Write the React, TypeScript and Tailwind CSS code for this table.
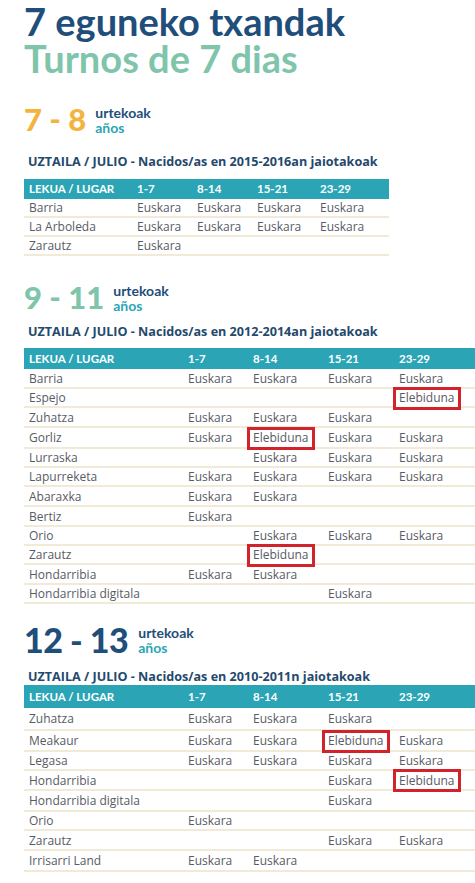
import React from "react";

type Cell = "" | "E" | "B";
type Row = { name: string; h: number; cells: Cell[] };

const BLUE = "text-[#1f4e7a]";

function Box() {
  return (
    <span className="inline-flex items-center h-[23px] -ml-[6px] px-[3px] border-[3px] border-[#d2232d] bg-white">
      Elebiduna
    </span>
  );
}

function Table({
  widths,
  rows,
  headerH,
  width,
}: {
  widths: number[];
  rows: Row[];
  headerH: number;
  width: number;
}) {
  const headers = ["LEKUA / LUGAR", "1-7", "8-14", "15-21", "23-29"];
  return (
    <div className="flex flex-col" style={{ width }}>
      <div
        className="flex items-center bg-[#2ba5b6] text-white font-bold text-[11.5px]"
        style={{ height: headerH }}
      >
        {headers.map((h, i) => (
          <div key={i} className="pl-[5px] shrink-0" style={{ width: widths[i] }}>
            {h}
          </div>
        ))}
      </div>
      {rows.map((r, ri) => (
        <div
          key={ri}
          className="flex items-center border-b-[2px] border-[#f1ead7] text-[12px] text-[#575b63] font-['Open_Sans',sans-serif]"
          style={{ height: r.h }}
        >
          <div className="pl-[5px] shrink-0 pt-[1px]" style={{ width: widths[0] }}>
            {r.name}
          </div>
          {r.cells.map((c, ci) => (
            <div
              key={ci}
              className="pl-[5px] shrink-0 flex items-center pt-[1px]"
              style={{ width: widths[ci + 1] }}
            >
              {c === "E" ? "Euskara" : c === "B" ? <Box /> : null}
            </div>
          ))}
        </div>
      ))}
    </div>
  );
}

function Age({
  num,
  color,
  size,
  gap,
}: {
  num: string;
  color: string;
  size: string;
  gap: string;
}) {
  return (
    <div className={`flex items-center ${gap}`}>
      <div className={`font-black ${color} ${size} leading-none`}>{num}</div>
      <div className="flex flex-col text-[14px] font-bold leading-[15px]">
        <span className={BLUE}>urtekoak</span>
        <span className="text-[#2ba5b6]">años</span>
      </div>
    </div>
  );
}

function Sub({ text }: { text: string }) {
  return (
    <div className="text-[12.6px] font-bold text-[#24496c] leading-[14px] pl-[4px] font-['Open_Sans',sans-serif]">
      {text}
    </div>
  );
}

const t1: Row[] = [
  { name: "Barria", h: 19, cells: ["E", "E", "E", "E"] },
  { name: "La Arboleda", h: 19, cells: ["E", "E", "E", "E"] },
  { name: "Zarautz", h: 19, cells: ["E", "", "", ""] },
];

const t2: Row[] = [
  { name: "Barria", h: 20, cells: ["E", "E", "E", "E"] },
  { name: "Espejo", h: 19, cells: ["", "", "", "B"] },
  { name: "Zuhatza", h: 20, cells: ["E", "E", "E", ""] },
  { name: "Gorliz", h: 21, cells: ["E", "B", "E", "E"] },
  { name: "Lurraska", h: 19, cells: ["", "E", "E", "E"] },
  { name: "Lapurreketa", h: 19, cells: ["E", "E", "E", "E"] },
  { name: "Abaraxka", h: 20, cells: ["E", "E", "", ""] },
  { name: "Bertiz", h: 20, cells: ["E", "", "", ""] },
  { name: "Orio", h: 19, cells: ["", "E", "E", "E"] },
  { name: "Zarautz", h: 19, cells: ["", "B", "", ""] },
  { name: "Hondarribia", h: 20, cells: ["E", "E", "", ""] },
  { name: "Hondarribia digitala", h: 19, cells: ["", "", "E", ""] },
];

const t3: Row[] = [
  { name: "Zuhatza", h: 23, cells: ["E", "E", "E", ""] },
  { name: "Meakaur", h: 21, cells: ["E", "E", "B", "E"] },
  { name: "Legasa", h: 19, cells: ["E", "E", "E", "E"] },
  { name: "Hondarribia", h: 20, cells: ["", "", "E", "B"] },
  { name: "Hondarribia digitala", h: 21, cells: ["", "", "E", ""] },
  { name: "Orio", h: 19, cells: ["E", "", "", ""] },
  { name: "Zarautz", h: 20, cells: ["", "", "E", "E"] },
  { name: "Irrisarri Land", h: 21, cells: ["E", "E", "", ""] },
];

export default function App() {
  return (
    <div className="w-[475px] h-[883px] overflow-hidden bg-white font-['Lato',sans-serif]">
      <div className="pl-[24px] pt-[1px]">
        <div className={`font-bold text-[38px] leading-[40px] ${BLUE}`}>7 eguneko txandak</div>
        <div className="font-bold text-[38px] leading-[40px] -mt-[3px] text-[#7fc5ab]">Turnos de 7 dias</div>

        <div className="mt-[26px]">
          <Age num="7 - 8" color="text-[#f3b43e]" size="text-[31px]" gap="gap-[9px]" />
        </div>
        <div className="mt-[20px]">
          <Sub text="UZTAILA / JULIO - Nacidos/as en 2015-2016an jaiotakoak" />
        </div>
        <div className="mt-[10px]">
          <Table widths={[108, 60, 60, 63, 74]} rows={t1} headerH={20} width={365} />
        </div>

        <div className="mt-[26px]">
          <Age num="9 - 11" color="text-[#7fc5ab]" size="text-[31px]" gap="gap-[9px]" />
        </div>
        <div className="mt-[12px]">
          <Sub text="UZTAILA / JULIO - Nacidos/as en 2012-2014an jaiotakoak" />
        </div>
        <div className="mt-[9px]">
          <Table widths={[159, 65, 75, 71, 81]} rows={t2} headerH={21} width={451} />
        </div>

        <div className="mt-[19px]">
          <Age num="12 - 13" color="text-[#1f4e7a]" size="text-[34px] tracking-[-0.5px]" gap="gap-[10px]" />
        </div>
        <div className="mt-[13px]">
          <Sub text="UZTAILA / JULIO - Nacidos/as en 2010-2011n jaiotakoak" />
        </div>
        <div className="mt-[1px]">
          <Table widths={[159, 65, 75, 71, 81]} rows={t3} headerH={23} width={451} />
        </div>
      </div>
    </div>
  );
}
